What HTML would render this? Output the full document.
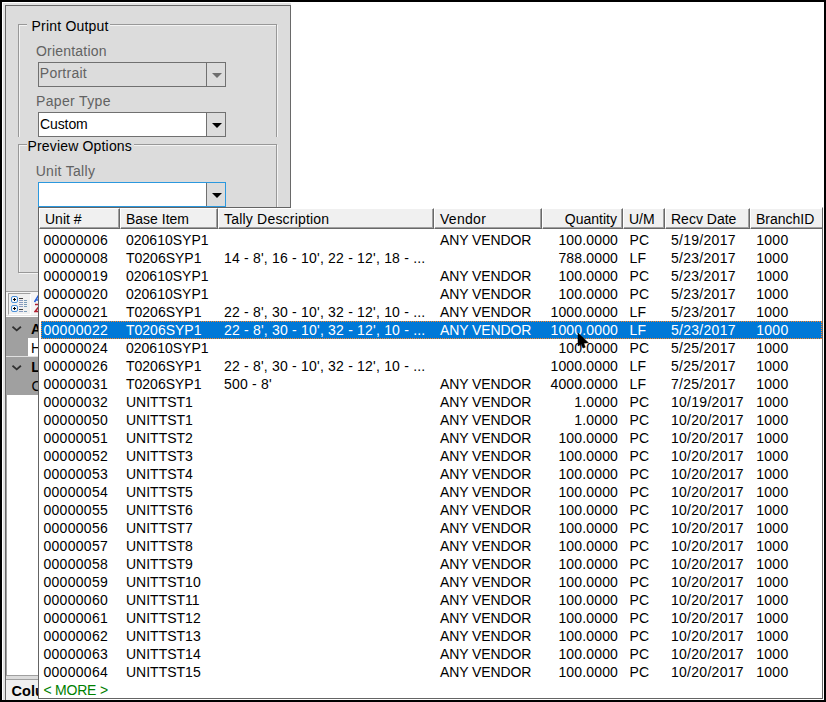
<!DOCTYPE html>
<html><head><meta charset="utf-8"><title>Unit Tally</title>
<style>
html,body{margin:0;padding:0;}
body{width:826px;height:702px;background:#000;position:relative;overflow:hidden;font-family:"Liberation Sans",sans-serif;font-size:14px;color:#000;}
div,span{box-sizing:border-box;}
#win{position:absolute;left:2px;top:2px;width:822px;height:698px;background:#fff;}
#frame{position:absolute;left:2px;top:2px;width:289px;height:698px;background:#e3e3e3;border-left:1px solid #fff;border-top:1px solid #fff;}
#panel{position:absolute;left:5px;top:5px;width:286px;height:286px;background:#dcdcdc;border-left:1px solid #696969;border-top:1px solid #696969;border-right:1px solid #696969;}
.lbl{position:absolute;white-space:nowrap;line-height:18px;height:18px;}
.gray{color:#626262;}
.gb{position:absolute;border:1px solid #989898;box-shadow:1px 1px 0 #f4f4f4, inset 1px 1px 0 #f4f4f4;}
.gbfill{position:absolute;background:#dcdcdc;}
.combo.dis{background:#dcdcdc;}
.combo.foc{border-color:#2b98de;}
.gbt{position:absolute;background:#dcdcdc;white-space:nowrap;line-height:18px;height:18px;}
.combo{position:absolute;height:25px;width:188px;border:1px solid #707070;background:#fff;}
.combo .btn{position:absolute;right:0;top:0;bottom:0;width:19px;background:#dcdcdc;border-left:1px solid #707070;}
.combo .txt{position:absolute;left:2px;top:3px;line-height:18px;white-space:nowrap;}
.combo svg{position:absolute;left:5px;top:10px;}
#popup{position:absolute;left:38px;top:207px;width:785px;height:492px;background:#fff;border:1px solid #646464;border-top-color:#fff;overflow:hidden;}
#ptop{position:absolute;left:38px;top:207px;width:253px;height:1px;background:#646464;}
#hdr{position:absolute;left:0;top:0;width:783px;height:21px;background:#f0f0f0;}
.hc{position:absolute;top:0;height:21px;background:#f0f0f0;border-left:1px solid #fff;border-top:1px solid #fff;border-right:1px solid #696969;border-bottom:1px solid #696969;box-shadow:inset -1px -1px 0 #a0a0a0;line-height:18px;white-space:nowrap;overflow:hidden;}
.hc span{position:absolute;top:1px;}
.hc span.l{left:5px;}
.hc span.r{right:5px;}
#rows{position:absolute;left:0;top:23px;width:783px;height:470px;}
.row{position:absolute;left:2px;width:781px;height:18px;line-height:18px;white-space:nowrap;}
.row span{position:absolute;top:0;}
.row.sel{background:#0078d7;color:#fff;}
.row.sel::before{content:"";position:absolute;left:0;top:0;right:0;bottom:0;
background:
 repeating-linear-gradient(90deg,#ff8728 0 1px,transparent 1px 2px) 0 0/100% 1px no-repeat,
 repeating-linear-gradient(90deg,#ff8728 0 1px,transparent 1px 2px) 1px 100%/100% 1px no-repeat,
 repeating-linear-gradient(180deg,#ff8728 0 1px,transparent 1px 2px) 0 0/1px 100% no-repeat,
 repeating-linear-gradient(180deg,#ff8728 0 1px,transparent 1px 2px) 100% 1px/1px 100% no-repeat;}
.row.more{color:#008000;}
.row.more .c0{letter-spacing:-0.2px;}
.c0{left:2.4px;letter-spacing:0.3px;}
.c1{left:85px;}
.c2{left:183px;letter-spacing:0.2px;}
.c3{left:399px;letter-spacing:-0.1px;}
.c4{right:204px;letter-spacing:0.15px;}
.c5{left:588.6px;}
.c6{left:629.9px;letter-spacing:0.3px;}
.c7{left:715.3px;letter-spacing:0.25px;}
#lower{position:absolute;left:0;top:0;width:38px;height:702px;overflow:hidden;}
#vline{position:absolute;left:5px;top:5px;width:1px;height:695px;background:#696969;}
.tb{position:absolute;left:6px;top:291px;width:285px;height:26px;background:#f5f5f5;border-top:1px solid #a0a0a0;border-bottom:1px solid #fff;box-shadow:inset 0 -1px 0 #e3e3e3;}
.tbtn{position:absolute;left:8px;top:293px;width:23px;height:22px;background:#f0f0f0;border-left:1px solid #a0a0a0;border-top:1px solid #a0a0a0;border-right:1px solid #fff;border-bottom:1px solid #fff;}
.tbtn svg{position:absolute;left:-1px;top:-1px;}
.az{position:absolute;left:34px;top:295px;}
.pg{position:absolute;left:6px;top:317px;width:285px;height:78px;background:#a0a0a0;}
.pgcell{position:absolute;left:28px;top:338px;width:260px;height:18px;background:#fff;}
.pgline{position:absolute;left:6px;top:356px;width:285px;height:1px;background:#e0e0e0;}
.chev{position:absolute;left:12px;}
.b{font-weight:bold;}
.split{position:absolute;left:6px;top:675px;width:285px;height:5px;background:#dcdcdc;border-top:1px solid #a0a0a0;border-bottom:1px solid #a0a0a0;}
.desc{position:absolute;left:6px;top:680px;width:285px;height:20px;background:#f0f0f0;}
#pgwhite{position:absolute;left:6px;top:291px;width:285px;height:409px;background:#fff;}
.hc span.t{letter-spacing:0.2px;}
.hc span.v{letter-spacing:0.3px;}
#cur{position:absolute;left:539.3px;top:124.8px;overflow:visible;}
.pgl{position:absolute;left:6px;top:317px;width:1px;height:383px;background:#a0a0a0;}
</style></head>
<body>
<div id="win"></div>
<div id="frame"></div>
<div id="panel"></div>
<div id="pgwhite"></div>
<div id="vline"></div>
<div class="gb" style="left:18px;top:24px;width:259px;height:125px"></div>
<div class="gbt" style="left:27px;top:18px;width:83px"></div>
<div class="lbl" style="left:31.5px;top:17px;letter-spacing:0.2px">Print Output</div>
<div class="lbl gray" style="left:36px;top:42px;letter-spacing:0.2px">Orientation</div>
<div class="combo dis" style="left:38px;top:62px"><span class="txt gray" style="left:0.8px;top:1px;letter-spacing:0.25px">Portrait</span><div class="btn"><svg width="10" height="5" viewBox="0 0 10 5"><polygon points="0,0 10,0 5,5" fill="#6d6d6d"/></svg></div></div>
<div class="lbl gray" style="left:36px;top:92px;letter-spacing:0.35px">Paper Type</div>
<div class="combo" style="left:38px;top:112px"><span class="txt" style="left:1px;top:2px;letter-spacing:-0.1px">Custom</span><div class="btn"><svg width="10" height="5" viewBox="0 0 10 5"><polygon points="0,0 10,0 5,5" fill="#000"/></svg></div></div>
<div class="gbfill" style="left:17px;top:137px;width:262px;height:14px"></div>
<div class="gb" style="left:18px;top:144px;width:259px;height:129px"></div>
<div class="gbt" style="left:27px;top:137px;width:107px"></div>
<div class="lbl" style="left:27.5px;top:137px;letter-spacing:0.17px">Preview Options</div>
<div class="lbl gray" style="left:35.7px;top:162px;letter-spacing:0.3px">Unit Tally</div>
<div class="combo foc" style="left:38px;top:182px"><div class="btn"><svg width="10" height="5" viewBox="0 0 10 5"><polygon points="0,0 10,0 5,5" fill="#000"/></svg></div></div>
<div id="lower">
<div class="tb"></div>
<div class="tbtn">
<svg width="21" height="20" viewBox="0 0 21 20" shape-rendering="crispEdges">
<rect x="3.5" y="3.5" width="6" height="6" rx="1.5" fill="#f4f8fc" stroke="#4a90d9" shape-rendering="auto"/>
<rect x="3.5" y="12.5" width="6" height="6" rx="1.5" fill="#f4f8fc" stroke="#4a90d9" shape-rendering="auto"/>
<rect x="5" y="6" width="3" height="1" fill="#000"/><rect x="6" y="5" width="1" height="3" fill="#000"/>
<rect x="5" y="15" width="3" height="1" fill="#000"/><rect x="6" y="14" width="1" height="3" fill="#000"/>
<rect x="11" y="5" width="4" height="1" fill="#404040"/>
<rect x="11" y="7" width="4" height="1" fill="#8a9cc0"/><rect x="16" y="7" width="3" height="1" fill="#7a9cb8"/>
<rect x="11" y="9" width="4" height="1" fill="#8a9cc0"/><rect x="16" y="9" width="3" height="1" fill="#7a9cb8"/>
<rect x="11" y="11" width="4" height="1" fill="#8a9cc0"/><rect x="16" y="11" width="3" height="1" fill="#7a9cb8"/>
<rect x="11" y="13" width="4" height="1" fill="#8a9cc0"/><rect x="16" y="13" width="3" height="1" fill="#7a9cb8"/>
<rect x="11" y="16" width="4" height="1" fill="#404040"/>
<rect x="11" y="18" width="4" height="1" fill="#8a9cc0"/><rect x="16" y="18" width="3" height="1" fill="#7a9cb8"/>
</svg>
</div>
<svg class="az" width="8" height="18" viewBox="0 0 8 18"><path d="M0.5 7 L4.5 0.5 L6 0.5 L6 7 M2 5 L6 5" stroke="#2a62d8" stroke-width="1.6" fill="none"/><path d="M1 9.5 L6.5 9.5 L1 16.5 L7 16.5" stroke="#b02030" stroke-width="1.6" fill="none"/></svg>
<div class="pg"></div>
<div class="pgl"></div>
<div class="pgcell"></div>
<div class="pgline"></div>
<svg class="chev" style="top:326px" width="10" height="6" viewBox="0 0 10 6"><path d="M0.5 0.7 L4.7 4.4 L8.9 0.7" stroke="#303030" stroke-width="1.8" fill="none"/></svg>
<svg class="chev" style="top:365px" width="10" height="6" viewBox="0 0 10 6"><path d="M0.5 0.7 L4.7 4.4 L8.9 0.7" stroke="#303030" stroke-width="1.8" fill="none"/></svg>
<div class="lbl b" style="left:31px;top:320px">Appearance</div>
<div class="lbl" style="left:31px;top:339px">Header</div>
<div class="lbl b" style="left:31.2px;top:358px">Layout</div>
<div class="lbl" style="left:31.5px;top:377px">Columns</div>
<div class="split"></div>
<div class="desc"></div>
<div class="lbl b" style="left:11.6px;top:682px;font-size:14.5px">Columns</div>
</div>
<div id="popup">
<div id="hdr">
<div class="hc h0" style="left:0px;width:81px"><span class="l">Unit #</span></div>
<div class="hc h1" style="left:81px;width:98px"><span class="l">Base Item</span></div>
<div class="hc h2" style="left:179px;width:216px"><span class="l t">Tally Description</span></div>
<div class="hc h3" style="left:395px;width:108px"><span class="l v">Vendor</span></div>
<div class="hc h4" style="left:503px;width:81px"><span class="r">Quantity</span></div>
<div class="hc h5" style="left:584px;width:42px"><span class="l">U/M</span></div>
<div class="hc h6" style="left:626px;width:85px"><span class="l">Recv Date</span></div>
<div class="hc h7" style="left:711px;width:74px"><span class="l">BranchID</span></div>
</div>
<div id="rows">
<div class="row" style="top:0px"><span class="c0">00000006</span><span class="c1">020610SYP1</span><span class="c3">ANY VENDOR</span><span class="c4">100.0000</span><span class="c5">PC</span><span class="c6">5/19/2017</span><span class="c7">1000</span></div>
<div class="row" style="top:18px"><span class="c0">00000008</span><span class="c1">T0206SYP1</span><span class="c2">14 - 8', 16 - 10', 22 - 12', 18 - ...</span><span class="c4">788.0000</span><span class="c5">LF</span><span class="c6">5/23/2017</span><span class="c7">1000</span></div>
<div class="row" style="top:36px"><span class="c0">00000019</span><span class="c1">020610SYP1</span><span class="c3">ANY VENDOR</span><span class="c4">100.0000</span><span class="c5">PC</span><span class="c6">5/23/2017</span><span class="c7">1000</span></div>
<div class="row" style="top:54px"><span class="c0">00000020</span><span class="c1">020610SYP1</span><span class="c3">ANY VENDOR</span><span class="c4">100.0000</span><span class="c5">PC</span><span class="c6">5/23/2017</span><span class="c7">1000</span></div>
<div class="row" style="top:72px"><span class="c0">00000021</span><span class="c1">T0206SYP1</span><span class="c2">22 - 8', 30 - 10', 32 - 12', 10 - ...</span><span class="c3">ANY VENDOR</span><span class="c4">1000.0000</span><span class="c5">LF</span><span class="c6">5/23/2017</span><span class="c7">1000</span></div>
<div class="row sel" style="top:90px"><span class="c0">00000022</span><span class="c1">T0206SYP1</span><span class="c2">22 - 8', 30 - 10', 32 - 12', 10 - ...</span><span class="c3">ANY VENDOR</span><span class="c4">1000.0000</span><span class="c5">LF</span><span class="c6">5/23/2017</span><span class="c7">1000</span></div>
<div class="row" style="top:108px"><span class="c0">00000024</span><span class="c1">020610SYP1</span><span class="c4">100.0000</span><span class="c5">PC</span><span class="c6">5/25/2017</span><span class="c7">1000</span></div>
<div class="row" style="top:126px"><span class="c0">00000026</span><span class="c1">T0206SYP1</span><span class="c2">22 - 8', 30 - 10', 32 - 12', 10 - ...</span><span class="c4">1000.0000</span><span class="c5">LF</span><span class="c6">5/25/2017</span><span class="c7">1000</span></div>
<div class="row" style="top:144px"><span class="c0">00000031</span><span class="c1">T0206SYP1</span><span class="c2">500 - 8'</span><span class="c3">ANY VENDOR</span><span class="c4">4000.0000</span><span class="c5">LF</span><span class="c6">7/25/2017</span><span class="c7">1000</span></div>
<div class="row" style="top:162px"><span class="c0">00000032</span><span class="c1">UNITTST1</span><span class="c3">ANY VENDOR</span><span class="c4">1.0000</span><span class="c5">PC</span><span class="c6">10/19/2017</span><span class="c7">1000</span></div>
<div class="row" style="top:180px"><span class="c0">00000050</span><span class="c1">UNITTST1</span><span class="c3">ANY VENDOR</span><span class="c4">1.0000</span><span class="c5">PC</span><span class="c6">10/20/2017</span><span class="c7">1000</span></div>
<div class="row" style="top:198px"><span class="c0">00000051</span><span class="c1">UNITTST2</span><span class="c3">ANY VENDOR</span><span class="c4">100.0000</span><span class="c5">PC</span><span class="c6">10/20/2017</span><span class="c7">1000</span></div>
<div class="row" style="top:216px"><span class="c0">00000052</span><span class="c1">UNITTST3</span><span class="c3">ANY VENDOR</span><span class="c4">100.0000</span><span class="c5">PC</span><span class="c6">10/20/2017</span><span class="c7">1000</span></div>
<div class="row" style="top:234px"><span class="c0">00000053</span><span class="c1">UNITTST4</span><span class="c3">ANY VENDOR</span><span class="c4">100.0000</span><span class="c5">PC</span><span class="c6">10/20/2017</span><span class="c7">1000</span></div>
<div class="row" style="top:252px"><span class="c0">00000054</span><span class="c1">UNITTST5</span><span class="c3">ANY VENDOR</span><span class="c4">100.0000</span><span class="c5">PC</span><span class="c6">10/20/2017</span><span class="c7">1000</span></div>
<div class="row" style="top:270px"><span class="c0">00000055</span><span class="c1">UNITTST6</span><span class="c3">ANY VENDOR</span><span class="c4">100.0000</span><span class="c5">PC</span><span class="c6">10/20/2017</span><span class="c7">1000</span></div>
<div class="row" style="top:288px"><span class="c0">00000056</span><span class="c1">UNITTST7</span><span class="c3">ANY VENDOR</span><span class="c4">100.0000</span><span class="c5">PC</span><span class="c6">10/20/2017</span><span class="c7">1000</span></div>
<div class="row" style="top:306px"><span class="c0">00000057</span><span class="c1">UNITTST8</span><span class="c3">ANY VENDOR</span><span class="c4">100.0000</span><span class="c5">PC</span><span class="c6">10/20/2017</span><span class="c7">1000</span></div>
<div class="row" style="top:324px"><span class="c0">00000058</span><span class="c1">UNITTST9</span><span class="c3">ANY VENDOR</span><span class="c4">100.0000</span><span class="c5">PC</span><span class="c6">10/20/2017</span><span class="c7">1000</span></div>
<div class="row" style="top:342px"><span class="c0">00000059</span><span class="c1">UNITTST10</span><span class="c3">ANY VENDOR</span><span class="c4">100.0000</span><span class="c5">PC</span><span class="c6">10/20/2017</span><span class="c7">1000</span></div>
<div class="row" style="top:360px"><span class="c0">00000060</span><span class="c1">UNITTST11</span><span class="c3">ANY VENDOR</span><span class="c4">100.0000</span><span class="c5">PC</span><span class="c6">10/20/2017</span><span class="c7">1000</span></div>
<div class="row" style="top:378px"><span class="c0">00000061</span><span class="c1">UNITTST12</span><span class="c3">ANY VENDOR</span><span class="c4">100.0000</span><span class="c5">PC</span><span class="c6">10/20/2017</span><span class="c7">1000</span></div>
<div class="row" style="top:396px"><span class="c0">00000062</span><span class="c1">UNITTST13</span><span class="c3">ANY VENDOR</span><span class="c4">100.0000</span><span class="c5">PC</span><span class="c6">10/20/2017</span><span class="c7">1000</span></div>
<div class="row" style="top:414px"><span class="c0">00000063</span><span class="c1">UNITTST14</span><span class="c3">ANY VENDOR</span><span class="c4">100.0000</span><span class="c5">PC</span><span class="c6">10/20/2017</span><span class="c7">1000</span></div>
<div class="row" style="top:432px"><span class="c0">00000064</span><span class="c1">UNITTST15</span><span class="c3">ANY VENDOR</span><span class="c4">100.0000</span><span class="c5">PC</span><span class="c6">10/20/2017</span><span class="c7">1000</span></div>
<div class="row more" style="top:450px"><span class="c0">&lt; MORE &gt;</span></div>
</div>
<svg id="cur" width="12" height="17" viewBox="0 0 12 17"><polygon points="0,0 0,12.9 3.1,11.3 5.0,15 7.3,14.2 5.8,10.3 10.4,9.7" fill="#000" stroke="#000" stroke-width="0.5" stroke-linejoin="round"/></svg>
</div>
<div id="ptop"></div>
</body></html>
